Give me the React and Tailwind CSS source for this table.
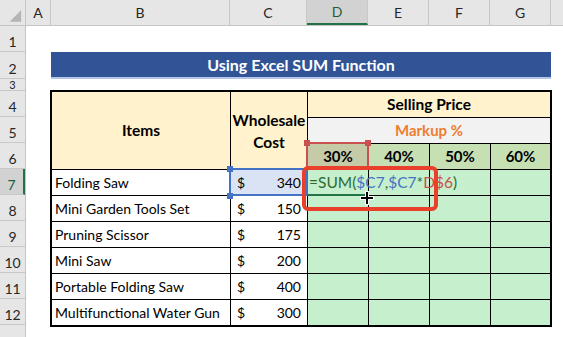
import React from 'react';

const font = { fontFamily: 'Lato, "Liberation Sans", sans-serif' };

const colHeads = [
  { label: '', w: 'w-[26px]' },
  { label: 'A', w: 'w-[25px]' },
  { label: 'B', w: 'w-[179px]' },
  { label: 'C', w: 'w-[77px]' },
  { label: 'D', w: 'w-[61px]', active: true },
  { label: 'E', w: 'w-[61px]' },
  { label: 'F', w: 'w-[61px]' },
  { label: 'G', w: 'w-[61px]' },
];

const rowHeads = [
  { n: 1, h: 'h-[26px]' },
  { n: 2, h: 'h-[27px]' },
  { n: 3, h: 'h-[12px]', small: true },
  { n: 4, h: 'h-[26px]' },
  { n: 5, h: 'h-[26px]' },
  { n: 6, h: 'h-[26px]' },
  { n: 7, h: 'h-[26px]', active: true },
  { n: 8, h: 'h-[26px]' },
  { n: 9, h: 'h-[26px]' },
  { n: 10, h: 'h-[26px]' },
  { n: 11, h: 'h-[26px]' },
  { n: 12, h: 'h-[26px]' },
];

const items = [
  ['Folding Saw', 340],
  ['Mini Garden Tools Set', 150],
  ['Pruning Scissor', 175],
  ['Mini Saw', 200],
  ['Portable Folding Saw', 400],
  ['Multifunctional Water Gun', 300],
];

function Handle({ className }) {
  return <div className={`absolute w-[6px] h-[6px] ${className}`} />;
}

export default function App() {
  return (
    <div className="relative w-[563px] h-[337px] overflow-hidden bg-white text-black" style={font}>
      {/* Column headers */}
      <div className="flex h-[26px] bg-[#e6e6e6] border-b border-[#c4c4c4]">
        {colHeads.map((c, i) => (
          <div
            key={i}
            className={`${c.w} shrink-0 flex items-center justify-center border-r border-[#c8c8c8] text-[14px] ${
              c.active ? 'bg-[#d2d2d2] border-b-2 border-b-[#217346] text-[#1e5e38]' : 'text-[#262626]'
            }`}
          >
            {i === 0 ? (
              <svg width="26" height="25" viewBox="0 0 26 25" className="self-end">
                <polygon points="10,22 22,22 22,10" fill="#b5b5b5" />
              </svg>
            ) : (
              c.label
            )}
          </div>
        ))}
        <div className="flex-1" />
      </div>

      <div className="flex">
        {/* Row headers */}
        <div className="w-[26px] shrink-0 bg-[#e6e6e6] border-r border-[#c4c4c4] h-[311px]">
          {rowHeads.map(r => (
            <div
              key={r.n}
              className={`${r.h} flex justify-center border-b border-[#c8c8c8] leading-none overflow-hidden ${
                r.small ? 'items-center text-[11px]' : 'items-end pb-[2px] text-[14px]'
              } ${r.active ? 'bg-[#d2d2d2] border-r-2 border-r-[#217346] text-[#1e5e38]' : 'text-[#262626]'}`}
            >
              {r.n}
            </div>
          ))}
        </div>

        {/* Sheet */}
        <div className="flex-1 pt-[26px]">
          <div className="ml-[25px] w-[500px] h-[27px] bg-[#305496] border-b-2 border-[#b4c6e7] flex items-center justify-center text-white font-bold text-[16px]">
            Using Excel SUM Function
          </div>

          <div className="ml-[24px] mt-[11px] w-fit border-2 border-black bg-black grid grid-cols-[178px_76px_60px_60px_60px_59px] grid-rows-[repeat(9,25px)] gap-px text-[14px]">
            <div className="row-span-3 bg-[#fff2cc] flex items-center justify-center font-bold text-[15.5px]">Items</div>
            <div className="row-span-3 bg-[#fff2cc] flex items-center justify-center font-bold text-center leading-[22px] text-[15.5px]">
              Wholesale
              <br />
              Cost
            </div>
            <div className="col-span-4 bg-[#fff2cc] flex items-center justify-center font-bold text-[15.5px]">Selling Price</div>
            <div className="col-span-4 bg-[#f2f2f2] flex items-center justify-center font-bold text-[15px] text-[#ed7d31]">Markup %</div>
            {['30%', '40%', '50%', '60%'].map((p, i) => (
              <div
                key={p}
                className={`flex items-center justify-center font-bold text-[15px] ${i === 0 ? 'bg-[#c5cba7]' : 'bg-[#c6e0b4]'}`}
              >
                {p}
              </div>
            ))}
            {items.map(([name, cost], r) => (
              <React.Fragment key={name}>
                <div className="bg-white flex items-center pl-[3px] whitespace-nowrap">{name}</div>
                <div className={`flex items-center justify-between px-[6px] ${r === 0 ? 'bg-[#dae3f3]' : 'bg-white'}`}>
                  <span>$</span>
                  <span>{cost}</span>
                </div>
                <div className="bg-[#c6efce]" />
                <div className="bg-[#c6efce]" />
                <div className="bg-[#c6efce]" />
                <div className="bg-[#c6efce]" />
              </React.Fragment>
            ))}
          </div>
        </div>
      </div>

      {/* D6 reference highlight */}
      <div className="absolute left-[306px] top-[142px] w-[63px] h-[28px] border-2 border-[#c8504f]" />
      <Handle className="left-[304px] top-[140px] bg-[#c8504f]" />
      <Handle className="left-[365px] top-[140px] bg-[#c8504f]" />

      {/* C7 reference highlight */}
      <div className="absolute left-[229px] top-[168px] w-[79px] h-[28px] border-2 border-[#4472c4]" />
      <Handle className="left-[227px] top-[166px] bg-[#4472c4]" />
      <Handle className="left-[227px] top-[193px] bg-[#4472c4]" />

      {/* Active cell underline */}
      <div className="absolute left-[307px] top-[194px] w-[60px] h-[2px] bg-[#217346]" />

      {/* Formula being typed */}
      <div className="absolute left-[309px] top-[171px] whitespace-nowrap text-[15.5px] text-[#2f6b2f]">
        =SUM(<span className="text-[#4472c4]">$C7</span>,<span className="text-[#4472c4]">$C7</span>*
        <span className="text-[#c8504f]">D$6</span>)
      </div>

      {/* Annotation box */}
      <div className="absolute left-[302px] top-[166px] w-[136px] h-[45px] border-4 border-[#e8402a] rounded-[6px]" />

      {/* Cursor */}
      <svg className="absolute left-[359px] top-[190px]" width="16" height="16" viewBox="0 0 16 16">
        <path d="M6 1h4v5h5v4h-5v5H6v-5H1V6h5z" fill="#fff" />
        <path d="M7 2h2v5h5v2H9v5H7V9H2V7h5z" fill="#000" />
      </svg>
    </div>
  );
}
